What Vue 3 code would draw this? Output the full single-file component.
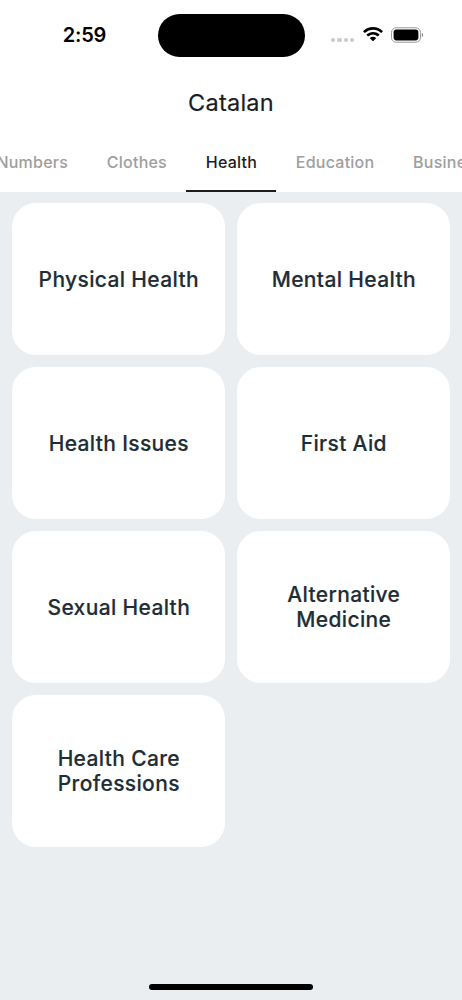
<script setup>
const tabs = ['Numbers', 'Clothes', 'Health', 'Education', 'Business']
const cards = [
  ['Physical Health'], ['Mental Health'], ['Health Issues'], ['First Aid'],
  ['Sexual Health'], ['Alternative', 'Medicine'], ['Health Care', 'Professions'],
]
</script>

<template>
  <main class="screen">
    <header class="top">
      <div class="status">
        <span class="time">2:59</span>
        <span class="island"></span>
        <div class="indicators">
          <span class="dots"><i v-for="n in 4" :key="n"></i></span>
          <svg class="wifi" width="20" height="15" viewBox="0 0 20 15">
            <path d="M10 0C6.2 0 2.8 1.5.3 3.9c-.2.2-.2.5 0 .7l1.2 1.2c.2.2.5.2.7 0A11.2 11.2 0 0 1 10 2.8c3 0 5.7 1.1 7.8 3 .2.2.5.2.7 0l1.2-1.2c.2-.2.2-.5 0-.7A14 14 0 0 0 10 0Z" />
            <path d="M10 4.9c-2.4 0-4.6.9-6.3 2.4-.2.2-.2.5 0 .7l1.2 1.2c.2.2.5.2.7 0a6.5 6.5 0 0 1 8.800 0c.2.2.5.2.7 0L16.3 8c.2-.2.2-.5 0-.7A9.3 9.3 0 0 0 10 4.9Z" />
            <path d="M10 9.7c-1.1 0-2.1.4-2.9 1-.2.2-.2.5 0 .7l2.5 2.5c.2.2.5.2.7 0l2.6-2.5c.2-.2.2-.5 0-.7-.8-.6-1.8-1-2.9-1Z" />
          </svg>
          <svg class="battery" width="33" height="16" viewBox="0 0 33 16">
            <rect x=".5" y=".8" width="29" height="14.4" rx="4.7" fill="none" stroke="#999" />
            <rect x="2.6" y="2.6" width="24.8" height="10.8" rx="2.8" />
            <path d="M30.8 5.8c.9.4 1.3 1.3 1.3 2.2s-.4 1.8-1.3 2.2Z" fill="#888" />
          </svg>
        </div>
      </div>
      <h1>Catalan</h1>
      <nav>
        <a v-for="tab in tabs" :key="tab" :class="{ active: tab === 'Health' }"><span>{{ tab }}</span></a>
      </nav>
    </header>
    <section class="grid">
      <article v-for="card in cards" :key="card[0]">
        <div><p v-for="line in card" :key="line">{{ line }}</p></div>
      </article>
    </section>
    <footer><span></span></footer>
  </main>
</template>

<style>
body { margin: 0; }
</style>
<style scoped>
.screen { width: 462px; height: 1000px; overflow: hidden; background: #eaeef1; font-family: Inter, sans-serif; display: flex; flex-direction: column; }
.top { height: 191.5px; background: #fff; flex: none; }
.status { height: 70px; display: grid; grid-template-columns: 157.5px 147px 157.5px; align-items: center; }
.time { justify-self: center; font-size: 20px; font-weight: 600; margin-left: 11.5px; line-height: 70px; letter-spacing: -.2px; }
.island { height: 43px; border-radius: 22px; background: #000; }
.indicators { display: flex; align-items: center; padding-left: 26.5px; margin-top: -1px; }
.dots { display: flex; gap: 2.2px; margin-top: 11px; }
.dots i { width: 4.2px; height: 4.2px; border-radius: 1.8px; background: #ccc; }
.wifi { margin-left: 8.6px; }
.battery { margin-left: 8.4px; flex: none; }
h1 { margin: 0; height: 64px; line-height: 65px; text-align: center; font-size: 23.5px; font-weight: 400; letter-spacing: .24px; color: #1c1c1e; -webkit-text-stroke: .2px #1c1c1e; }
nav { height: 57.5px; width: max-content; display: flex; margin-left: -23px; }
nav a { box-sizing: border-box; padding: 0 19.4px; height: 57.5px; line-height: 56px; font-size: 16px; font-weight: 500; letter-spacing: .23px; color: #9e9e9e; white-space: nowrap; }
nav a.active { color: #1c1c1e; border-bottom: 2px solid #1c1c1e; }
.grid { display: grid; grid-template-columns: 213px 213px; grid-auto-rows: 152px; gap: 12px; padding: 11.8px 12px; }
article { background: #fff; border-radius: 24px; display: flex; align-items: center; justify-content: center; text-align: center; }
p { margin: 0; padding-left: .6px; font-size: 21px; line-height: 25px; font-weight: 500; letter-spacing: .35px; color: #202d35; white-space: nowrap; -webkit-text-stroke: .15px #202d35; }
footer { margin-top: auto; height: 16px; display: flex; justify-content: center; }
footer span { width: 164px; height: 6px; border-radius: 3px; background: #000; }
</style>
